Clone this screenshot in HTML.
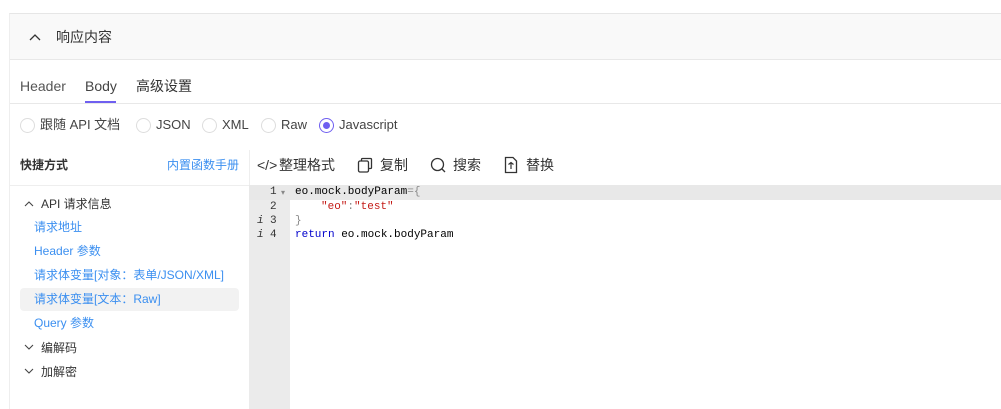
<!DOCTYPE html>
<html><head><meta charset="utf-8"><style>
*{margin:0;padding:0;box-sizing:border-box}
body{width:1001px;height:409px;overflow:hidden;background:#fff;font-family:"Liberation Sans","Noto Sans CJK SC",sans-serif;font-size:13px;color:#333;position:relative}
.a{position:absolute;white-space:nowrap;line-height:16px}
.blue{color:#3b8ff0}
.mono{font-family:"Liberation Mono","DejaVu Sans Mono",monospace;font-size:11px;line-height:14px}
.radio{position:absolute;width:15px;height:15px;border:1px solid #ddd;border-radius:50%;top:118px}
</style></head><body>
<div class="a" style="left:9px;top:13px;width:992px;height:396px;border-left:1px solid #eee;border-top:1px solid #e6e6e6"></div>
<div class="a" style="left:10px;top:14px;width:991px;height:46px;background:#f9f9f9;border-bottom:1px solid #e8e8e8"></div>
<svg class="a" style="left:29px;top:33px" width="12" height="8" viewBox="0 0 12 8"><path d="M1 7L6 2L11 7" fill="none" stroke="#333" stroke-width="1.3"/></svg>
<div class="a" style="left:56px;top:29px;font-size:14px">响应内容</div>
<div class="a" style="left:20px;top:78px;font-size:14px;color:#555">Header</div>
<div class="a" style="left:85px;top:78px;font-size:14px;color:#444">Body</div>
<div class="a" style="left:136px;top:78px;font-size:14px;color:#333">高级设置</div>
<div class="a" style="left:85px;top:101px;width:31px;height:2px;background:#6f5ff0"></div>
<div class="a" style="left:10px;top:103px;width:991px;height:1px;background:#e8e8e8"></div>
<div class="radio" style="left:20px"></div><div class="a" style="left:40px;top:117px;font-size:13px;color:#444">跟随 API 文档</div>
<div class="radio" style="left:136px"></div><div class="a" style="left:156px;top:117px;color:#444">JSON</div>
<div class="radio" style="left:202px"></div><div class="a" style="left:222px;top:117px;color:#444">XML</div>
<div class="radio" style="left:261px"></div><div class="a" style="left:281px;top:117px;color:#444">Raw</div>
<div class="radio" style="left:319px;border-color:#6f5ff0"><div style="position:absolute;left:3px;top:3px;width:7px;height:7px;border-radius:50%;background:#6f5ff0"></div></div>
<div class="a" style="left:339px;top:117px;color:#444">Javascript</div>
<div class="a" style="left:20px;top:157px;font-size:12px;font-weight:bold;color:#333">快捷方式</div>
<div class="a blue" style="left:167px;top:157px;font-size:12px">内置函数手册</div>
<div class="a" style="left:249px;top:150px;width:1px;height:259px;background:#eee"></div>
<div class="a" style="left:10px;top:185px;width:239px;height:1px;background:#eee"></div>
<div class="a" style="left:257px;top:157px;font-size:14px">&lt;/&gt;</div>
<div class="a" style="left:279px;top:157px;font-size:14px">整理格式</div>
<svg class="a" style="left:357px;top:157px" width="16" height="16" viewBox="0 0 16 16"><rect x="1.5" y="4" width="10" height="11" rx="1.5" fill="none" stroke="#333" stroke-width="1.3"/><path d="M4.5 4V2.5Q4.5 1.5 5.5 1.5H13.5Q14.5 1.5 14.5 2.5V10.5Q14.5 11.5 13.5 11.5H11.5" fill="none" stroke="#333" stroke-width="1.3"/></svg>
<div class="a" style="left:380px;top:157px;font-size:14px">复制</div>
<svg class="a" style="left:430px;top:157px" width="16" height="16" viewBox="0 0 16 16"><circle cx="7.5" cy="7.5" r="6" fill="none" stroke="#333" stroke-width="1.3"/><path d="M11.5 11.5L15 15" stroke="#333" stroke-width="1.3"/></svg>
<div class="a" style="left:453px;top:157px;font-size:14px">搜索</div>
<svg class="a" style="left:504px;top:156px" width="14" height="18" viewBox="0 0 14 18"><path d="M1.5 1.5H9L12.5 5V16.5H1.5Z" fill="none" stroke="#333" stroke-width="1.3"/><path d="M7 13V7M4.5 8.5L7 6.5L9.5 8.5" fill="none" stroke="#333" stroke-width="1.2"/></svg>
<div class="a" style="left:526px;top:157px;font-size:14px">替换</div>
<div class="a" style="left:249px;top:185px;width:41px;height:224px;background:#ebebeb"></div>
<div class="a" style="left:249px;top:185px;width:752px;height:15px;background:#e8e8e8"></div>
<div class="a mono" style="left:270px;top:185px;color:#333">1</div>
<div class="a" style="left:281px;top:185px;font-size:8px;color:#888">▾</div>
<div class="a mono" style="left:270px;top:200px;color:#333">2</div>
<div class="a mono" style="left:257px;top:214px;color:#333;font-style:italic">i</div><div class="a mono" style="left:270px;top:214px">3</div>
<div class="a mono" style="left:257px;top:228px;color:#333;font-style:italic">i</div><div class="a mono" style="left:270px;top:228px">4</div>
<div class="a mono" style="left:295px;top:185px;color:#000">eo.mock.bodyParam<span style="color:#888">={</span></div>
<div class="a mono" style="left:321px;top:200px"><span style="color:#c41a16">"eo"</span><span style="color:#888">:</span><span style="color:#c41a16">"test"</span></div>
<div class="a mono" style="left:295px;top:214px;color:#888">}</div>
<div class="a mono" style="left:295px;top:228px;color:#000"><span style="color:#0000cc">return</span> eo.mock.bodyParam</div>
<svg class="a" style="left:24px;top:200px" width="10" height="7" viewBox="0 0 10 7"><path d="M1 6L5 2L9 6" fill="none" stroke="#444" stroke-width="1.1"/></svg>
<div class="a" style="left:41px;top:196px;font-size:12px;color:#333">API 请求信息</div>
<div class="a blue" style="left:34px;top:219px;font-size:12px">请求地址</div>
<div class="a blue" style="left:34px;top:243px;font-size:12px">Header 参数</div>
<div class="a blue" style="left:34px;top:267px;font-size:12px">请求体变量[对象：表单/JSON/XML]</div>
<div class="a" style="left:20px;top:288px;width:219px;height:23px;background:#f2f2f2;border-radius:4px"></div>
<div class="a blue" style="left:34px;top:291px;font-size:12px">请求体变量[文本：Raw]</div>
<div class="a blue" style="left:34px;top:315px;font-size:12px">Query 参数</div>
<svg class="a" style="left:24px;top:344px" width="10" height="7" viewBox="0 0 10 7"><path d="M1 1L5 5L9 1" fill="none" stroke="#444" stroke-width="1.1"/></svg>
<div class="a" style="left:41px;top:340px;font-size:12px">编解码</div>
<svg class="a" style="left:24px;top:368px" width="10" height="7" viewBox="0 0 10 7"><path d="M1 1L5 5L9 1" fill="none" stroke="#444" stroke-width="1.1"/></svg>
<div class="a" style="left:41px;top:364px;font-size:12px">加解密</div>
</body></html>
